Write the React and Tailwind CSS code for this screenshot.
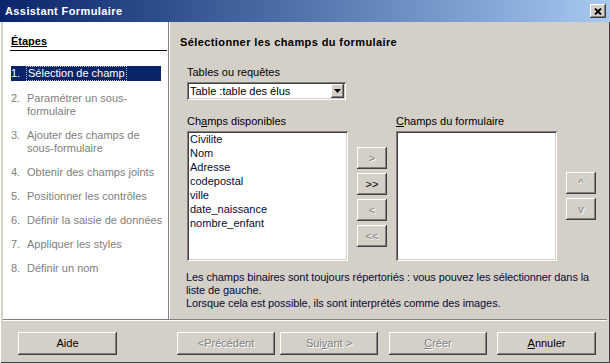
import React from 'react';

const raised =
  'bg-[#d4d0c8] shadow-[inset_-1px_-1px_0_#404040,inset_1px_1px_0_#ffffff,inset_-2px_-2px_0_#808080,inset_2px_2px_0_#d4d0c8]';
const sunken =
  'bg-white shadow-[inset_1px_1px_0_#808080,inset_-1px_-1px_0_#ffffff,inset_2px_2px_0_#404040,inset_-2px_-2px_0_#d4d0c8]';

const steps = [
  ['2.', ['Paramétrer un sous-', 'formulaire']],
  ['3.', ['Ajouter des champs de', 'sous-formulaire']],
  ['4.', ['Obtenir des champs joints']],
  ['5.', ['Positionner les contrôles']],
  ['6.', ['Définir la saisie de données']],
  ['7.', ['Appliquer les styles']],
  ['8.', ['Définir un nom']],
];

const fields = ['Civilite', 'Nom', 'Adresse', 'codepostal', 'ville', 'date_naissance', 'nombre_enfant'];

const Btn = ({ children, disabled, className = '' }) => (
  <div
    className={`${raised} flex items-center justify-center ${
      disabled ? 'text-[#808080] [text-shadow:1px_1px_0_#ffffff]' : 'text-black'
    } ${className}`}
  >
    {children}
  </div>
);

const App = () => {
  return (
    <div className="w-[610px] h-[363px] bg-[#d4d0c8] flex flex-col font-['Liberation_Sans',Arial,sans-serif] text-[11px] leading-[13px] text-black overflow-hidden">
      {/* title bar */}
      <div className="h-[22px] shrink-0 flex items-center justify-between pl-[5px] pr-[4px] bg-gradient-to-r from-[#0a246a] to-[#a6caf0]">
        <span className="text-white font-bold text-[11px] tracking-[0.4px]">Assistant Formulaire</span>
        <div className={`${raised} w-[16px] h-[14px] flex items-center justify-center`}>
          <svg width="8" height="7" viewBox="0 0 8 7">
            <path d="M1 0.5 L7 6.5 M7 0.5 L1 6.5" stroke="#000" strokeWidth="1.8" />
          </svg>
        </div>
      </div>

      <div className="flex-1 flex flex-col px-[3px] pb-[3px] shadow-[inset_1px_0_0_#ffffff,inset_-1px_-1px_0_#404040]">
        <div className="h-[297px] flex">
          {/* left pane: steps */}
          <div className="w-[166px] bg-white border-r border-[#808080] pl-[8px] pr-[1px]">
            <div className="pt-[13px] font-bold underline text-black">Étapes</div>
            <div className="h-px bg-black mt-[2px] -ml-[1px]" />
            <div className="flex flex-col gap-[11px] mt-[15px]">
              <div className="w-[150px] bg-[#0a246a] text-white flex py-[1px]">
                <span className="w-[16px]">1.</span>
                <span className="outline outline-1 outline-dotted outline-[#c0c0c0] px-[1px]">Sélection de champ</span>
              </div>
              {steps.map(([n, lines]) => (
                <div key={n} className="flex text-[#808080]">
                  <span className="w-[16px] shrink-0">{n}</span>
                  <div className="flex flex-col">
                    {lines.map((l) => (
                      <span key={l}>{l}</span>
                    ))}
                  </div>
                </div>
              ))}
            </div>
          </div>

          {/* right pane */}
          <div className="flex-1 border-l border-white pl-[10px]">
            <div className="pt-[14px] font-bold tracking-[0.4px]">Sélectionner les champs du formulaire</div>
            <div className="pl-[7px]">
              <div className="mt-[17px]">Tables ou requêtes</div>
              <div className={`${sunken} mt-[3px] w-[159px] h-[18px] flex items-center justify-between pl-[3px] pr-[2px]`}>
                <span>Table :table des élus</span>
                <div className={`${raised} w-[13px] h-[14px] flex items-center justify-center`}>
                  <svg width="7" height="4" viewBox="0 0 7 4">
                    <path d="M0 0 H7 L3.5 4 Z" fill="#000" />
                  </svg>
                </div>
              </div>

              <div className="flex items-start mt-[15px]">
                <div className="w-[161px]">
                  <div>
                    Ch<span className="underline">a</span>mps disponibles
                  </div>
                  <div className={`${sunken} mt-[3px] h-[130px] pl-[3px] pt-[1px] leading-[14px] text-[#0a0a30]`}>
                    {fields.map((f) => (
                      <div key={f}>{f}</div>
                    ))}
                  </div>
                </div>

                <div className="w-[30px] ml-[9px] mt-[32px] flex flex-col gap-[4px]">
                  <Btn disabled className="h-[22px]">&gt;</Btn>
                  <Btn className="h-[22px]">&gt;&gt;</Btn>
                  <Btn disabled className="h-[22px]">&lt;</Btn>
                  <Btn disabled className="h-[22px]">&lt;&lt;</Btn>
                </div>

                <div className="w-[161px] ml-[9px]">
                  <div>
                    <span className="underline">C</span>hamps du formulaire
                  </div>
                  <div className={`${sunken} mt-[3px] h-[130px]`} />
                </div>

                <div className="w-[30px] ml-[9px] mt-[57px] flex flex-col gap-[4px]">
                  <Btn disabled className="h-[22px]">^</Btn>
                  <Btn disabled className="h-[22px]">v</Btn>
                </div>
              </div>

              <div className="mt-[10px] -ml-[1px] text-[#0a0a30] tracking-[-0.1px]">
                <div>Les champs binaires sont toujours répertoriés : vous pouvez les sélectionner dans la</div>
                <div>liste de gauche.</div>
                <div>Lorsque cela est possible, ils sont interprétés comme des images.</div>
              </div>
            </div>
          </div>
        </div>

        {/* separator */}
        <div className="h-px bg-[#808080]" />
        <div className="h-px bg-white" />

        {/* bottom buttons */}
        <div className="flex mt-[11px] pl-[15px]">
          <Btn className="w-[99px] h-[23px]">Aide</Btn>
          <Btn disabled className="w-[98px] h-[23px] ml-[60px]">&lt;Précédent</Btn>
          <Btn disabled className="w-[98px] h-[23px] ml-[5px]">
            Sui<span className="underline">v</span>ant &gt;
          </Btn>
          <Btn disabled className="w-[98px] h-[23px] ml-[11px]">
            <span className="underline">C</span>réer
          </Btn>
          <Btn className="w-[99px] h-[23px] ml-[10px]">
            <span className="underline">A</span>nnuler
          </Btn>
        </div>
      </div>
    </div>
  );
};

export default App;
